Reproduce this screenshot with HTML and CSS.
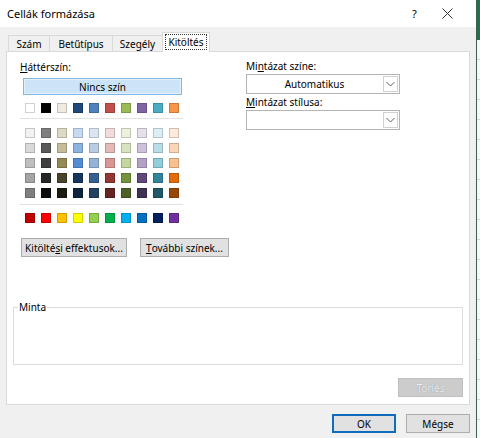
FILE: index.html
```html
<!DOCTYPE html>
<html>
<head>
<meta charset="utf-8">
<link rel="stylesheet" href="styles.css">
</head>
<body>
<div class="screen">
  <div class="dialog">
    <div class="titlebar">
      <span class="title">Cellák formázása</span>
      <span class="help">?</span>
      <span class="close"><svg width="11" height="11" viewBox="0 0 11 11"><path d="M0.5 0.5L10.5 10.5M10.5 0.5L0.5 10.5" stroke="#333" stroke-width="1" fill="none"/></svg></span>
    </div>
    <div class="body">
      <div class="tabs">
        <div class="tab t1">Szám</div>
        <div class="tab t2">Betűtípus</div>
        <div class="tab t3">Szegély</div>
        <div class="tab active"><span class="focus">Kitöltés</span></div>
      </div>
      <div class="panel">
        <div class="top">
          <div class="left">
            <div class="label"><u>H</u>áttérszín:</div>
            <div class="nocolor">Nincs szín</div>
            <div class="row first">
              <i style="background:#ffffff"></i><i style="background:#000000"></i><i style="background:#eeece1"></i><i style="background:#1f497d"></i><i style="background:#4f81bd"></i><i style="background:#c0504d"></i><i style="background:#9bbb59"></i><i style="background:#8064a2"></i><i style="background:#4bacc6"></i><i style="background:#f79646"></i>
            </div>
            <div class="sep"></div>
            <div class="grid">
              <i style="background:#f2f2f2"></i><i style="background:#7f7f7f"></i><i style="background:#ddd9c3"></i><i style="background:#c6d9f0"></i><i style="background:#dbe5f1"></i><i style="background:#f2dcdb"></i><i style="background:#ebf1dd"></i><i style="background:#e5e0ec"></i><i style="background:#dbeef3"></i><i style="background:#fdeada"></i>
              <i style="background:#d9d9d9"></i><i style="background:#595959"></i><i style="background:#c4bd97"></i><i style="background:#8db3e2"></i><i style="background:#b8cce4"></i><i style="background:#e5b9b7"></i><i style="background:#d7e3bc"></i><i style="background:#ccc1d9"></i><i style="background:#b7dde8"></i><i style="background:#fbd5b5"></i>
              <i style="background:#bfbfbf"></i><i style="background:#3f3f3f"></i><i style="background:#938953"></i><i style="background:#548dd4"></i><i style="background:#95b3d7"></i><i style="background:#d99694"></i><i style="background:#c3d69b"></i><i style="background:#b2a2c7"></i><i style="background:#92cddc"></i><i style="background:#fac08f"></i>
              <i style="background:#a5a5a5"></i><i style="background:#262626"></i><i style="background:#494429"></i><i style="background:#17365d"></i><i style="background:#366092"></i><i style="background:#953734"></i><i style="background:#76923c"></i><i style="background:#5f497a"></i><i style="background:#31859b"></i><i style="background:#e36c09"></i>
              <i style="background:#7f7f7f"></i><i style="background:#0c0c0c"></i><i style="background:#1d1b10"></i><i style="background:#0f243e"></i><i style="background:#244061"></i><i style="background:#632423"></i><i style="background:#4f6128"></i><i style="background:#3f3151"></i><i style="background:#205867"></i><i style="background:#974806"></i>
            </div>
            <div class="sep sep2"></div>
            <div class="row std">
              <i style="background:#c00000"></i><i style="background:#ff0000"></i><i style="background:#ffc000"></i><i style="background:#ffff00"></i><i style="background:#92d050"></i><i style="background:#00b050"></i><i style="background:#00b0f0"></i><i style="background:#0070c0"></i><i style="background:#002060"></i><i style="background:#7030a0"></i>
            </div>
            <div class="btnrow">
              <div class="btn effects">Kitölté<u>s</u>i effektusok...</div>
              <div class="btn more"><u>T</u>ovábbi színek...</div>
            </div>
          </div>
          <div class="right">
            <div class="label">Mi<u>n</u>tázat színe:</div>
            <div class="combo"><span class="value">Automatikus</span><span class="arrow"><svg width="9" height="6" viewBox="0 0 9 6"><path d="M0.5 1L4.5 5L8.5 1" stroke="#606060" stroke-width="1" fill="none"/></svg></span></div>
            <div class="label label2"><u>M</u>intázat stílusa:</div>
            <div class="combo"><span class="value"></span><span class="arrow"><svg width="9" height="6" viewBox="0 0 9 6"><path d="M0.5 1L4.5 5L8.5 1" stroke="#606060" stroke-width="1" fill="none"/></svg></span></div>
          </div>
        </div>
        <fieldset class="minta"><legend>Minta</legend></fieldset>
        <div class="clearrow"><div class="btn disabled">Törlés</div></div>
      </div>
      <div class="footer">
        <div class="btn ok">OK</div>
        <div class="btn cancel">Mégse</div>
      </div>
    </div>
  </div>
  <div class="sheet"></div>
</div>
</body>
</html>
```

FILE: styles.css
```css
* { box-sizing: border-box; }
html, body { margin: 0; padding: 0; }
body {
  width: 480px;
  height: 438px;
  overflow: hidden;
  font-family: "Noto Sans", "DejaVu Sans", sans-serif;
  font-size: 10px;
  color: #000;
  background: #fff;
}
.screen { display: flex; width: 480px; height: 438px; }
.dialog {
  width: 477px;
  height: 438px;
  display: flex;
  flex-direction: column;
  border-right: 1px solid #3d5a55;
  background: #f0f0f0;
}
.sheet {
  flex: 1;
  background:
    linear-gradient(#217346, #217346) top / 100% 40px no-repeat,
    repeating-linear-gradient(#f7f7f7 0, #f7f7f7 19px, #d4d4d4 19px, #d4d4d4 20px);
}
.titlebar {
  height: 27px;
  background: #fff;
  display: flex;
  align-items: center;
  padding-left: 7px;
}
.title { font-size: 11px; flex: 1; }
.help { width: 30px; font-size: 11px; text-align: left; }
.close { width: 22px; display: flex; align-items: center; margin-right: 12px; }
.body { flex: 1; display: flex; flex-direction: column; padding: 0 6px; }
.tabs {
  height: 24px;
  display: flex;
  align-items: flex-end;
  padding-left: 2px;
}
.tab {
  height: 16px;
  border: 1px solid #d9d9d9;
  border-bottom: none;
  display: flex;
  align-items: center;
  justify-content: center;
  background: #f0f0f0;
  margin-right: -1px;
}
.t1 { width: 42px; }
.t2 { width: 64px; }
.t3 { width: 51px; }
.active {
  width: 48px;
  height: 20px;
  background: #fff;
  margin-bottom: -1px;
  position: relative;
  z-index: 1;
  padding: 1px 2px 2px;
}
.focus {
  border: 1px dotted #333;
  width: 100%;
  height: 100%;
  display: flex;
  align-items: center;
  justify-content: center;
}
.panel {
  width: 464px;
  height: 354px;
  background: #fff;
  border: 1px solid #d9d9d9;
  display: flex;
  flex-direction: column;
}
.top { display: flex; }
.left { width: 226px; padding: 8px 0 0 13px; }
.right { padding: 7px 0 0 13px; }
.label { height: 14px; line-height: 14px; }
.nocolor {
  margin: 4px 0 0 3px;
  width: 159px;
  height: 17px;
  background: #cce4f7;
  border: 1px solid #7fb7e6;
  box-shadow: inset 0 0 0 1px #e4f1fb;
  display: flex;
  align-items: center;
  justify-content: center;
}
.row { display: flex; gap: 6px; margin-left: 5px; }
.row.first { margin-top: 8px; }
.row i, .grid i {
  display: block;
  width: 10px;
  height: 10px;
  border: 1px solid rgba(0,0,0,0.18);
}
.sep { width: 163px; height: 1px; background: #e2e2e2; margin-top: 5px; }
.grid {
  display: grid;
  grid-template-columns: repeat(10, 10px);
  column-gap: 6px;
  row-gap: 5px;
  margin: 9px 0 0 5px;
}
.sep2 { margin-top: 6px; }
.row.std { margin-top: 8px; }
.btnrow { display: flex; gap: 13px; margin: 15px 0 0 1px; }
.btn {
  height: 19px;
  background: #e1e1e1;
  border: 1px solid #adadad;
  display: flex;
  align-items: center;
  justify-content: center;
}
.effects { width: 106px; }
.more { width: 89px; }
.combo {
  margin-top: 1px;
  width: 154px;
  height: 20px;
  border: 1px solid #b4b4b4;
  background: #fff;
  display: flex;
  align-items: stretch;
}
.value { flex: 1; display: flex; align-items: center; justify-content: center; }
.arrow {
  width: 15px;
  margin: 1px;
  border: 1px solid #d0d0d0;
  display: flex;
  align-items: center;
  justify-content: center;
}
.label2 { margin-top: 1px; }
.minta {
  margin: 44px 0 0 6px;
  width: 450px;
  height: 64px;
  padding: 0;
  border: 1px solid #dcdcdc;
  border-top-width: 1px;
}
.minta legend {
  margin-left: 4px;
  padding: 0 1px;
  line-height: 13px;
}
.clearrow { display: flex; justify-content: flex-end; margin: 13px 6px 0 0; }
.disabled {
  width: 65px;
  background: #cccccc;
  border-color: #bfbfbf;
  color: #eeeeee;
  text-shadow: 0 0 1px #8a8a8a;
}
.footer { display: flex; justify-content: flex-end; gap: 10px; margin-top: 9px; }
.ok { width: 64px; border: 2px solid #0f6cbd; }
.cancel { width: 64px; }
```
